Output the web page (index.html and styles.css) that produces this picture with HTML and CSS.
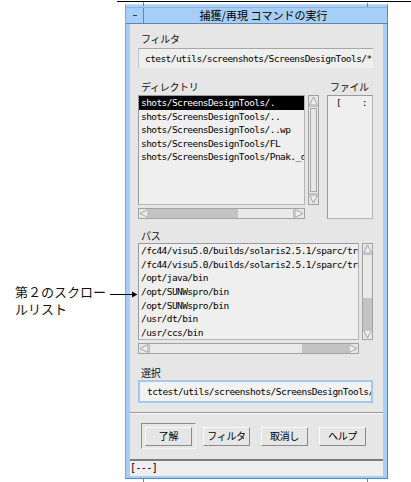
FILE: index.html
```html
<!DOCTYPE html>
<html lang="ja">
<head>
<meta charset="utf-8">
<title>捕獲/再現 コマンドの実行</title>
<link rel="stylesheet" href="styles.css">
</head>
<body>
<div class="page">
  <div class="topline"></div>
  <div class="window">
    <span class="mark mark-tl"></span>
    <span class="mark mark-tr"></span>
    <span class="mark mark-bl"></span>
    <span class="mark mark-br"></span>
    <div class="titlebar">
      <div class="menu-btn"><span class="dash"></span></div>
      <div class="title">捕獲/再現 コマンドの実行</div>
    </div>
    <div class="content">
      <div class="main">
        <div class="label">フィルタ</div>
        <div class="field filter">ctest/utils/screenshots/ScreensDesignTools/*</div>

        <div class="dir-grid">
          <div class="label dir-label">ディレクトリ</div>
          <div class="label file-label">ファイル</div>
          <div class="list dir-list">
            <div class="item sel">shots/ScreensDesignTools/.</div>
            <div class="item">shots/ScreensDesignTools/..</div>
            <div class="item">shots/ScreensDesignTools/..wp</div>
            <div class="item">shots/ScreensDesignTools/FL</div>
            <div class="item">shots/ScreensDesignTools/Pnak._d</div>
          </div>
          <div class="vscroll dir-vs">
            <span class="varrow"><svg width="9" height="10" viewBox="0 0 9 10"><polygon points="4.5,1 0.5,9 8.5,9" fill="#ededed" stroke="#a4a4a4"/></svg></span>
            <div class="vtrack"><div class="vslider"></div></div>
            <span class="varrow down"><svg width="9" height="10" viewBox="0 0 9 10"><polygon points="4.5,9 0.5,1 8.5,1" fill="#ededed" stroke="#a4a4a4"/></svg></span>
          </div>
          <div class="list file-list"><span>[</span><span>:</span></div>
          <div class="hscroll dir-hs">
            <span class="harrow"><svg width="10" height="9" viewBox="0 0 10 9"><polygon points="1,4.5 9,0.5 9,8.5" fill="#ededed" stroke="#a4a4a4"/></svg></span>
            <span class="part dark dir-thumb"></span>
            <span class="part light grow"></span>
            <span class="harrow right"><svg width="10" height="9" viewBox="0 0 10 9"><polygon points="9,4.5 1,0.5 1,8.5" fill="#ededed" stroke="#a4a4a4"/></svg></span>
          </div>
        </div>

        <div class="path-grid">
          <div class="label path-label">パス</div>
          <div class="list path-list">
            <div class="item">/fc44/visu5.0/builds/solaris2.5.1/sparc/tre</div>
            <div class="item">/fc44/visu5.0/builds/solaris2.5.1/sparc/tro</div>
            <div class="item">/opt/java/bin</div>
            <div class="item">/opt/SUNWspro/bin</div>
            <div class="item">/opt/SUNWspro/bin</div>
            <div class="item">/usr/dt/bin</div>
            <div class="item">/usr/ccs/bin</div>
          </div>
          <div class="vscroll path-vs">
            <span class="varrow"><svg width="9" height="10" viewBox="0 0 9 10"><polygon points="4.5,1 0.5,9 8.5,9" fill="#ededed" stroke="#a4a4a4"/></svg></span>
            <span class="part light path-vlight"></span>
            <span class="part dark grow"></span>
            <span class="varrow down"><svg width="9" height="10" viewBox="0 0 9 10"><polygon points="4.5,9 0.5,1 8.5,1" fill="#ededed" stroke="#a4a4a4"/></svg></span>
          </div>
          <div class="hscroll path-hs">
            <span class="harrow"><svg width="10" height="9" viewBox="0 0 10 9"><polygon points="1,4.5 9,0.5 9,8.5" fill="#ededed" stroke="#a4a4a4"/></svg></span>
            <span class="part light path-hlight"></span>
            <span class="part dark grow"></span>
            <span class="harrow right"><svg width="10" height="9" viewBox="0 0 10 9"><polygon points="9,4.5 1,0.5 1,8.5" fill="#ededed" stroke="#a4a4a4"/></svg></span>
          </div>
        </div>

        <div class="label sel-label">選択</div>
        <div class="field selection">tctest/utils/screenshots/ScreensDesignTools/*</div>
      </div>
      <div class="sep"></div>
      <div class="buttons">
        <div class="default-frame"><div class="btn">了解</div></div>
        <div class="btn">フィルタ</div>
        <div class="btn">取消し</div>
        <div class="btn">ヘルプ</div>
      </div>
    </div>
    <div class="footer">[---]</div>
  </div>

  <div class="callout">第２のスクロー<br>ルリスト</div>
  <svg class="callout-arrow" width="28" height="7" viewBox="0 0 28 7"><line x1="0" y1="3.5" x2="23" y2="3.5" stroke="#000" stroke-width="1"/><polygon points="22,0.5 27.5,3.5 22,6.5" fill="#000"/></svg>
</div>
</body>
</html>
```

FILE: styles.css
```css
html, body {
  margin: 0;
  padding: 0;
  background: #ffffff;
}

body {
  width: 411px;
  height: 482px;
  overflow: hidden;
  font-family: "Liberation Sans", "Noto Sans CJK JP", sans-serif;
  color: #000;
}

.page {
  position: relative;
  width: 411px;
  height: 482px;
}

.topline {
  height: 1px;
  margin-top: 1px;
  margin-left: 117px;
  background: #000;
}

.window {
  position: relative;
  margin-top: 2px;
  margin-left: 125px;
  width: 263px;
  height: 475px;
  box-sizing: border-box;
  background: #a7cef7;
  border: 1px solid;
  border-color: #c9e1fa #5f86b2 #5f86b2 #7fa7d4;
  padding: 2px 4px;
  display: flex;
  flex-direction: column;
}

.mark {
  position: absolute;
  background: #5f86b2;
}
.mark-tl { left: 17px; top: -3px; width: 1px; height: 4px; }
.mark-tr { left: 241px; top: -2px; width: 1px; height: 4px; }
.mark-bl { left: 17px; bottom: -5px; width: 1px; height: 5px; }
.mark-br { left: 241px; bottom: -5px; width: 1px; height: 5px; }

/* title bar */
.titlebar {
  height: 17px;
  box-sizing: border-box;
  border-top: 1px solid #8db5e0;
  border-bottom: 1px solid #5f86b2;
  margin: 0 -4px;
  padding: 0 4px;
  display: flex;
}

.menu-btn {
  position: relative;
  width: 14px;
  box-sizing: border-box;
  border-right: 1px solid #5f86b2;
}

.dash {
  position: absolute;
  left: 3px;
  top: 7px;
  width: 4px;
  height: 1px;
  background: #3c3c3c;
}

.title {
  flex: 1;
  text-align: center;
  font-family: "Noto Sans CJK JP", sans-serif;
  font-size: 11px;
  line-height: 15px;
  color: #000;
  white-space: nowrap;
}

/* content */
.content {
  height: 435px;
  background: #e6e6e6;
  display: flex;
  flex-direction: column;
}

.main {
  height: 388px;
  box-sizing: border-box;
  padding: 8px 10px 0 8px;
  display: flex;
  flex-direction: column;
}

.label {
  height: 14px;
  line-height: 14px;
  padding-left: 3px;
  font-family: "Noto Sans CJK JP", sans-serif;
  font-size: 10px;
  letter-spacing: -0.3px;
  white-space: nowrap;
  color: #111;
}

.field {
  box-sizing: border-box;
  white-space: nowrap;
  overflow: hidden;
  font-family: "DejaVu Sans Mono", monospace;
  font-size: 9.5px;
  letter-spacing: -0.57px;
  color: #000;
}

.filter {
  margin-top: 2px;
  height: 20px;
  line-height: 19px;
  padding-left: 6px;
  background: #efefef;
  border-top: 1px solid #a6a6a6;
  border-left: 1px solid #c4c4c4;
}

.selection {
  height: 23px;
  line-height: 19px;
  padding-left: 7px;
  background: #f2f2f2;
  border: 2px solid #a3c9f0;
}

/* directory/file area */
.dir-grid {
  margin-top: 12px;
  display: grid;
  grid-template-columns: 167px 3px 11px 8px 46px;
  grid-template-rows: 15px 110px 3px 11px;
  grid-template-areas:
    "dl dl dl . fl"
    "dlist . dvs . files"
    ". . . . files"
    "dhs . . . files";
}

.dir-label { grid-area: dl; }
.file-label { grid-area: fl; overflow: visible; }
.dir-list { grid-area: dlist; }
.dir-vs { grid-area: dvs; }
.file-list { grid-area: files; }
.dir-hs { grid-area: dhs; }

.list {
  box-sizing: border-box;
  background: #efefef;
  border: 1px solid;
  border-color: #9a9a9a #b4b4b4 #b4b4b4 #9a9a9a;
  overflow: hidden;
}

.item {
  height: 13.5px;
  line-height: 13.5px;
  padding-left: 2px;
  white-space: nowrap;
  font-family: "DejaVu Sans Mono", monospace;
  font-size: 9.5px;
  letter-spacing: -0.57px;
  color: #000;
}

.item.sel {
  background: #000;
  color: #fff;
}

.file-list {
  display: flex;
  gap: 20px;
  padding-left: 8px;
  font-family: "DejaVu Sans Mono", monospace;
  font-size: 9.5px;
  line-height: 13.5px;
}

/* scrollbars */
.hscroll {
  box-sizing: border-box;
  border: 1px solid #a2a2a2;
  display: flex;
  background: #e9e9e9;
}

.vscroll {
  box-sizing: border-box;
  border: 1px solid #a2a2a2;
  display: flex;
  flex-direction: column;
  background: #e9e9e9;
}

.harrow {
  width: 10px;
  flex: none;
  display: flex;
  align-items: center;
  justify-content: center;
  background: #e6e6e6;
  border-right: 1px solid #bdbdbd;
}
.harrow.right {
  border-right: 0;
  border-left: 1px solid #bdbdbd;
}

.varrow {
  height: 10px;
  flex: none;
  display: flex;
  align-items: center;
  justify-content: center;
  background: #e6e6e6;
  border-bottom: 1px solid #bdbdbd;
}
.varrow.down {
  border-bottom: 0;
  border-top: 1px solid #bdbdbd;
}

.harrow svg, .varrow svg { display: block; }

.part { display: block; flex: none; }
.part.grow { flex: 1; }
.dark { background: #c3c3c3; }
.light { background: #e9e9e9; }

.dir-thumb { width: 88px; }

.vtrack {
  flex: 1;
  padding: 1px 0;
  display: flex;
}
.vslider {
  flex: 1;
  margin: 0 1px;
  border: 1px solid #a8a8a8;
  background: #e6e6e6;
}

/* path area */
.path-grid {
  margin-top: 10px;
  display: grid;
  grid-template-columns: 221px 3px 11px;
  grid-template-rows: 14px 97px 3px 11px;
  grid-template-areas:
    "pl pl pl"
    "plist . pvs"
    ". . ."
    "phs . .";
}
.path-label { grid-area: pl; }
.path-list { grid-area: plist; }
.path-vs { grid-area: pvs; }
.path-hs { grid-area: phs; }

.path-list .item { height: 13.7px; line-height: 13.7px; }

.path-vlight { height: 43px; }
.path-hlight { width: 152px; }

.sel-label { margin-top: 12px; }

/* separator and buttons */
.sep {
  height: 2px;
  box-sizing: border-box;
  border-top: 1px solid #9a9a9a;
  border-bottom: 1px solid #f8f8f8;
}

.buttons {
  flex: 1;
  box-sizing: border-box;
  padding: 9px 0 0 11px;
  display: flex;
  align-items: flex-start;
}

.default-frame {
  width: 55px;
  height: 26px;
  box-sizing: border-box;
  padding: 3px;
  border: 1px solid;
  border-color: #8e8e8e #f4f4f4 #f4f4f4 #8e8e8e;
  margin-right: 7px;
}

.btn {
  width: 47px;
  height: 19px;
  box-sizing: border-box;
  border: 1px solid;
  border-color: #fbfbfb #8a8a8a #8a8a8a #fbfbfb;
  background: #e6e6e6;
  text-align: center;
  font-family: "Noto Sans CJK JP", sans-serif;
  font-size: 10px;
  line-height: 16px;
  letter-spacing: -0.3px;
  color: #000;
  white-space: nowrap;
  margin-top: 4px;
}

.default-frame .btn {
  margin-top: 0;
}

.buttons > .btn + .btn {
  margin-left: 11px;
}

/* footer */
.footer {
  height: 17px;
  box-sizing: border-box;
  border-top: 2px solid #7c7c7c;
  background: #eeeeee;
  padding-left: 0;
  font-family: "DejaVu Sans Mono", monospace;
  font-size: 10px;
  line-height: 14px;
  letter-spacing: -0.6px;
  color: #000;
  margin: 0;
}

/* callout */
.callout {
  position: absolute;
  left: 15px;
  top: 283px;
  font-family: "Noto Sans CJK JP", sans-serif;
  font-size: 13px;
  line-height: 16.5px;
  color: #111;
  white-space: nowrap;
}

.callout-arrow {
  position: absolute;
  left: 110px;
  top: 290px;
  display: block;
}
```
